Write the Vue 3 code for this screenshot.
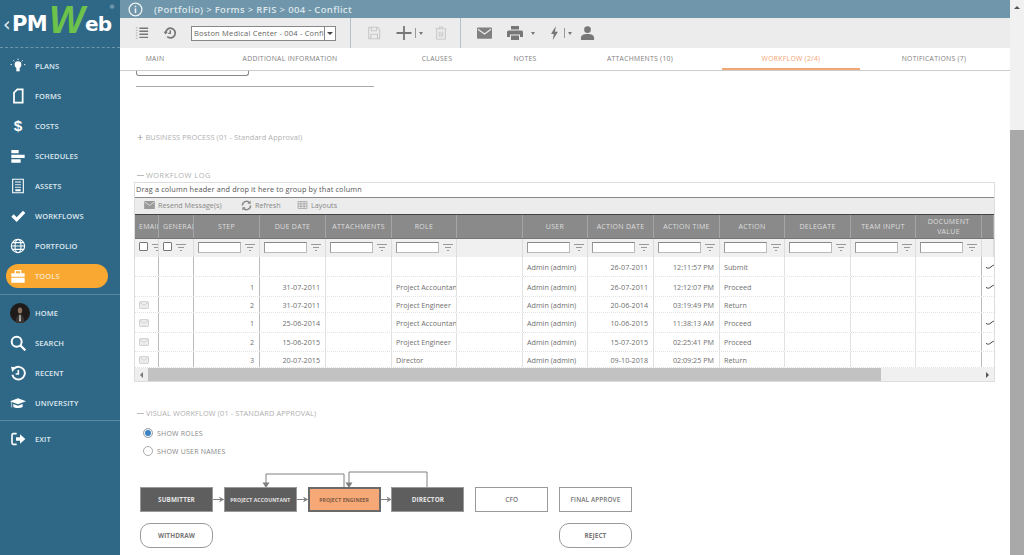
<template>
  <div class="page">
    <aside class="sidebar">
      <div class="logo">
        <span class="logo-back">‹</span><span class="logo-pm">PM</span><span class="logo-w">W</span><span class="logo-eb">eb</span><span class="logo-reg">®</span>
      </div>
      <nav class="nav">
        <div v-for="item in navTop" :key="item.label" class="nav-item" :class="{ active: item.active }">
          <svg class="nav-icon" viewBox="0 0 24 24" v-html="item.icon"></svg>
          <span>{{ item.label }}</span>
        </div>
      </nav>
      <nav class="nav nav-second">
        <div v-for="item in navBottom" :key="item.label" class="nav-item">
          <svg class="nav-icon" :class="{ large: item.avatar }" viewBox="0 0 24 24" v-html="item.icon"></svg>
          <span>{{ item.label }}</span>
        </div>
      </nav>
      <nav class="nav nav-second nav-exit">
        <div class="nav-item">
          <svg class="nav-icon" viewBox="0 0 24 24">
            <path d="M10 4H5a2 2 0 0 0-2 2v12a2 2 0 0 0 2 2h5" fill="none" stroke="#fff" stroke-width="2.4" />
            <path d="M9 9.5h6V5l8 7-8 7v-4.5H9z" fill="#fff" />
          </svg>
          <span>EXIT</span>
        </div>
      </nav>
    </aside>

    <div class="main">
      <header class="crumbs">
        <svg class="info" viewBox="0 0 16 16">
          <circle cx="8" cy="8" r="6.8" fill="none" stroke="#eef3f5" stroke-width="1.4" />
          <rect x="7.2" y="6.8" width="1.6" height="5" fill="#eef3f5" />
          <rect x="7.2" y="4" width="1.6" height="1.6" fill="#eef3f5" />
        </svg>
        <span>(Portfolio) &gt; Forms &gt; RFIS &gt; 004 - Conflict</span>
      </header>

      <div class="toolbar">
        <svg class="tool first" viewBox="0 0 16 16">
          <path d="M5 2.5h10M5 6h10M5 9.5h10M5 13h10" stroke="#777" stroke-width="1.6" />
          <path d="M1 2h2M1 5h2M1 8h2M1 11h2M1 14h2" stroke="#aaa" stroke-width="1" />
        </svg>
        <svg class="tool history" viewBox="0 0 16 16">
          <path d="M3 8a5.5 5.5 0 1 1 1.8 4.1" fill="none" stroke="#777" stroke-width="2" />
          <path d="M0.6 6.5h5L3 9.6z" fill="#777" />
          <path d="M8.3 4.8v3.6H6" fill="none" stroke="#777" stroke-width="1.6" />
        </svg>
        <div class="doc-select">
          <span>Boston Medical Center - 004 - Confl</span>
          <i class="doc-arrow"></i>
        </div>
        <div class="tool-sep sep-a"></div>
        <svg class="tool save" viewBox="0 0 16 16">
          <path d="M2 1.5h10l2.5 2.5v10.5H2z M5 1.5v4h6v-4 M4.5 14.5v-5h7.5v5" fill="none" stroke="#c6c6c6" stroke-width="1.2" />
        </svg>
        <svg class="tool plus" viewBox="0 0 16 16">
          <path d="M8 1v14M0.5 8h15" stroke="#777" stroke-width="1.8" />
        </svg>
        <div class="mini-sep"></div>
        <i class="caret"></i>
        <svg class="tool trash" viewBox="0 0 16 16">
          <path d="M3 4v11h10V4M1.5 3.2h13M6 3V1.2h4V3M6 6.5v6M8 6.5v6M10 6.5v6" fill="none" stroke="#c6c6c6" stroke-width="1.1" />
        </svg>
        <div class="tool-sep sep-b"></div>
        <svg class="tool mail" viewBox="0 0 16 12">
          <rect width="16" height="12" rx="1" fill="#808080" />
          <path d="M1 2l7 5 7-5" fill="none" stroke="#ececec" stroke-width="1.2" />
        </svg>
        <svg class="tool print" viewBox="0 0 16 14">
          <path d="M4 0h8v3.5H4zM1.5 4.5h13a1.5 1.5 0 0 1 1.5 1.5v5h-3V8.5H3V11H0V6a1.5 1.5 0 0 1 1.5-1.5zM4 9.5h8V14H4z" fill="#777" />
        </svg>
        <i class="caret print-caret"></i>
        <svg class="tool bolt" viewBox="0 0 10 16">
          <path d="M6.5 0L1 9h3.2L3 16l6-9.5H5.6z" fill="#777" />
        </svg>
        <div class="mini-sep bolt-sep"></div>
        <i class="caret"></i>
        <svg class="tool user" viewBox="0 0 16 16">
          <circle cx="8" cy="4.2" r="3.8" fill="#777" />
          <path d="M0.5 16v-2.5c0-2.6 2.6-4.3 7.5-4.3s7.5 1.7 7.5 4.3V16z" fill="#777" />
        </svg>
      </div>

      <div class="tabs">
        <div v-for="tab in tabs" :key="tab.label" class="tab" :class="{ current: tab.current }" :style="{ width: tab.width + 'px', paddingRight: (tab.pad || 0) + 'px' }">
          {{ tab.label }}
        </div>
      </div>

      <section class="content">
        <div class="stub-box"></div>
        <div class="stub-line"></div>

        <div class="section-title business"><span class="plus-mark">+</span> BUSINESS PROCESS (01 - Standard Approval)</div>
        <div class="section-title log-title"><span class="dash-mark"></span> WORKFLOW LOG</div>

        <div class="grid">
          <div class="group-panel">Drag a column header and drop it here to group by that column</div>
          <div class="grid-tools">
            <span class="grid-tool resend">
              <svg viewBox="0 0 12 9" class="g-ico"><rect width="12" height="9" fill="#9a9a9a" /><path d="M0.5 1l5.5 4 5.5-4" fill="none" stroke="#eee" stroke-width="0.9" /></svg>
              Resend Message(s)
            </span>
            <span class="grid-tool refresh">
              <svg viewBox="0 0 12 12" class="g-ico square"><path d="M1.5 6a4.5 4.5 0 0 1 8-2.8M10.5 6a4.5 4.5 0 0 1-8 2.8" fill="none" stroke="#888" stroke-width="1.6" /><path d="M10.5 0.5v3.5H7zM1.5 11.5V8H5z" fill="#888" /></svg>
              Refresh
            </span>
            <span class="grid-tool">
              <svg viewBox="0 0 12 10" class="g-ico"><path d="M.5.5h11v9H.5zM.5 3.5h11M.5 6.5h11M4 .5v9M8 .5v9" fill="none" stroke="#999" stroke-width="0.9" /></svg>
              Layouts
            </span>
          </div>

          <div class="row head">
            <div v-for="(col, i) in columns" :key="i" class="cell" :class="col.headClass">{{ col.title }}</div>
          </div>

          <div class="row filters">
            <div v-for="(col, i) in columns" :key="i" class="cell">
              <i v-if="col.filter === 'check'" class="check"></i>
              <i v-if="col.filter === 'input'" class="filter-input"></i>
              <svg v-if="col.filter" class="funnel" viewBox="0 0 10 7"><path d="M0 .5h10M2 3.5h6M4 6.5h2" stroke="#999" stroke-width="1" /></svg>
            </div>
          </div>

          <div v-for="(row, r) in rows" :key="r" class="row body" :style="{ height: row.h + 'px' }">
            <div class="cell"><svg v-if="row.mail" class="env" viewBox="0 0 12 9"><rect x=".5" y=".5" width="11" height="8" rx="1" fill="#eee" stroke="#c4c4c4" /><path d="M1 1.5l5 3.5 5-3.5" fill="none" stroke="#c4c4c4" stroke-width=".8" /></svg></div>
            <div class="cell"></div>
            <div class="cell right">{{ row.step }}</div>
            <div class="cell right">{{ row.due }}</div>
            <div class="cell"></div>
            <div class="cell">{{ row.role }}</div>
            <div class="cell"></div>
            <div class="cell">Admin (admin)</div>
            <div class="cell right">{{ row.date }}</div>
            <div class="cell right">{{ row.time }}</div>
            <div class="cell">{{ row.action }}</div>
            <div class="cell"></div>
            <div class="cell"></div>
            <div class="cell"></div>
            <div class="cell tail"><svg v-if="row.sign" class="squiggle" viewBox="0 0 10 5"><path d="M0 3.4c2 1.4 3.5 .8 5-.6s3-1.8 5-1.6" fill="none" stroke="#444" stroke-width="1" /></svg></div>
          </div>

          <div class="hscroll">
            <div class="hbtn"><i class="arrow-left"></i></div>
            <div class="hthumb"></div>
            <div class="hrest"><i class="arrow-right"></i></div>
          </div>
        </div>

        <div class="section-title visual-title"><span class="dash-mark"></span> VISUAL WORKFLOW (01 - STANDARD APPROVAL)</div>

        <div class="radio-row first-radio"><i class="radio on"></i> SHOW ROLES</div>
        <div class="radio-row"><i class="radio"></i> SHOW USER NAMES</div>

        <div class="flow">
          <svg class="flow-lines" viewBox="0 0 500 80" width="500" height="80">
            <g fill="none" stroke="#808080" stroke-width="1">
              <path d="M73 12.5h10.8M156.8 12.5h10.8M240.6 12.5h10.8" />
              <path d="M204 0v-13h-78v12" />
              <path d="M287 0v-15h-78v14" />
            </g>
            <g fill="#808080">
              <path d="M79 9.5l5 3-5 3 1.5-3zM163 9.5l5 3-5 3 1.5-3zM246.5 9.5l5 3-5 3 1.5-3z" />
              <path d="M122.5-4.500h7L126 1zM205.5-4.500h7L209 1z" />
            </g>
          </svg>
          <div v-for="box in boxes" :key="box.label" class="flow-box" :class="box.kind">{{ box.label }}</div>
          <div class="flow-box pill">WITHDRAW</div>
          <div class="flow-box pill reject">REJECT</div>
        </div>
      </section>
    </div>

    <div class="vscroll">
      <div class="vbtn"><i class="arrow-up"></i></div>
      <div class="vthumb"></div>
    </div>
  </div>
</template>

<script setup>
const white = 'fill="#fff"'

const navTop = [
  { label: 'PLANS', icon: `<circle cx="12" cy="10" r="5" ${white}/><rect x="9.500" y="15" width="5" height="5" ${white}/><path d="M12 1v2M3 10H1M23 10h-2M5 3.500l1.500 1.500M19 3.500L17.500 5" stroke="#fff" stroke-width="1.400"/>` },
  { label: 'FORMS', icon: `<path d="M11 2h8v20H6V7z" fill="none" stroke="#fff" stroke-width="2.600"/>` },
  { label: 'COSTS', icon: `<text x="12" y="20" text-anchor="middle" font-size="23" font-family="Liberation Sans, sans-serif" font-weight="700" fill="#fff">$</text>` },
  { label: 'SCHEDULES', icon: `<path d="M2 3h11v5H2zM2 10h20v5H2zM2 17h14v5H2z" ${white}/>` },
  { label: 'ASSETS', icon: `<path d="M4 2h16v20H4z" fill="none" stroke="#fff" stroke-width="1.600"/><path d="M8 5h2v2H8zM11 5h2v2h-2zM14 5h2v2h-2zM8 9h2v2H8zM11 9h2v2h-2zM14 9h2v2h-2zM8 13h2v2H8zM11 13h2v2h-2zM14 13h2v2h-2zM8 17h8v3H8z" ${white}/>` },
  { label: 'WORKFLOWS', icon: `<path d="M2 13l3.500-3.500L10 14 19.500 4 23 7.500 10 21z" ${white}/>` },
  { label: 'PORTFOLIO', icon: `<g fill="none" stroke="#fff" stroke-width="1.700"><circle cx="12" cy="12" r="10"/><ellipse cx="12" cy="12" rx="4.500" ry="10"/><path d="M2 12h20M3.500 7h17M3.500 17h17"/></g>` },
  { label: 'TOOLS', active: true, icon: `<path d="M2 8h20v5H2zM2 14.500h20V22H2z" ${white}/><path d="M8 8V4h8v4" fill="none" stroke="#fff" stroke-width="2"/>` }
]

const navBottom = [
  { label: 'HOME', avatar: true, icon: `<circle cx="12" cy="12" r="12" fill="#1f1b1a"/><path d="M7 24c0-7 1.500-10 5-10s5 3 5 10z" fill="#3a3532"/><ellipse cx="12" cy="9" rx="2.600" ry="3.600" fill="#8d7260"/><path d="M11.200 14h1.600l.4 8h-2.400z" fill="#bbb"/>` },
  { label: 'SEARCH', icon: `<circle cx="10" cy="10" r="7.500" fill="none" stroke="#fff" stroke-width="3"/><path d="M15.500 15.500L23 23" stroke="#fff" stroke-width="3.400"/>` },
  { label: 'RECENT', icon: `<path d="M6 5.500a9.500 9.500 0 1 1-2.500 9" fill="none" stroke="#fff" stroke-width="2.800"/><path d="M1.500 2.500l8 1-6 7z" ${white}/><path d="M12.500 7.500v6H8.500" fill="none" stroke="#fff" stroke-width="2.400"/>` },
  { label: 'UNIVERSITY', icon: `<path d="M0 9.500L12 5l12 4.500-12 4.500z" ${white}/><path d="M5 13.500v4.500c3 2 10 2 14 0v-4.500l-7 2.600z" ${white}/><path d="M2.500 10.500v8" stroke="#fff" stroke-width="1"/>` }
]

const tabs = [
  { label: 'MAIN', width: 70 },
  { label: 'ADDITIONAL INFORMATION', width: 200 },
  { label: 'CLAUSES', width: 94 },
  { label: 'NOTES', width: 82 },
  { label: 'ATTACHMENTS (10)', width: 156, pad: 8 },
  { label: 'WORKFLOW (2/4)', width: 138, current: true },
  { label: 'NOTIFICATIONS (7)', width: 150, pad: 2 }
]

const columns = [
  { title: 'EMAIL', filter: 'check', headClass: 'clip' },
  { title: 'GENERAL', filter: 'check', headClass: 'clip' },
  { title: 'STEP', filter: 'input' },
  { title: 'DUE DATE', filter: 'input' },
  { title: 'ATTACHMENTS', filter: 'input' },
  { title: 'ROLE', filter: 'input' },
  { title: '' },
  { title: 'USER', filter: 'input' },
  { title: 'ACTION DATE', filter: 'input' },
  { title: 'ACTION TIME', filter: 'input' },
  { title: 'ACTION', filter: 'input' },
  { title: 'DELEGATE', filter: 'input' },
  { title: 'TEAM INPUT', filter: 'input' },
  { title: 'DOCUMENT VALUE', filter: 'input', headClass: 'wrap' },
  { title: '' }
]

const rows = [
  { h: 20, step: '', due: '', role: '', date: '26-07-2011', time: '12:11:57 PM', action: 'Submit', sign: true },
  { h: 20, step: '1', due: '31-07-2011', role: 'Project Accountant', date: '26-07-2011', time: '12:12:07 PM', action: 'Proceed', sign: true },
  { h: 16, mail: true, step: '2', due: '31-07-2011', role: 'Project Engineer', date: '20-06-2014', time: '03:19:49 PM', action: 'Return' },
  { h: 20, mail: true, step: '1', due: '25-06-2014', role: 'Project Accountant', date: '10-06-2015', time: '11:38:13 AM', action: 'Proceed', sign: true },
  { h: 19, mail: true, step: '2', due: '15-06-2015', role: 'Project Engineer', date: '15-07-2015', time: '02:25:41 PM', action: 'Proceed', sign: true },
  { h: 16, mail: true, step: '3', due: '20-07-2015', role: 'Director', date: '09-10-2018', time: '02:09:25 PM', action: 'Return' }
]

const boxes = [
  { label: 'SUBMITTER', kind: 'done' },
  { label: 'PROJECT ACCOUNTANT', kind: 'done small' },
  { label: 'PROJECT ENGINEER', kind: 'now small' },
  { label: 'DIRECTOR', kind: 'done' },
  { label: 'CFO', kind: 'todo' },
  { label: 'FINAL APPROVE', kind: 'todo' }
]
</script>

<style>
html, body {
  margin: 0;
  background: #fff;
}
</style>

<style scoped>
.page {
  display: flex;
  width: 1024px;
  height: 555px;
  overflow: hidden;
  font-family: "Open Sans", "Liberation Sans", sans-serif;
  color: #666;
  background: #fff;
}

/* sidebar */
.sidebar {
  flex: 0 0 120px;
  background: #2f6887;
  color: #dfe9ee;
}

.logo {
  display: flex;
  align-items: baseline;
  height: 48px;
  box-sizing: border-box;
  padding: 8px 0 0 3px;
  border-bottom: 1px dashed #6d96ab;
  font-family: "DejaVu Sans", sans-serif;
  font-weight: 700;
  color: #fff;
  position: relative;
}

.logo-back {
  font-size: 19px;
  font-weight: 400;
  width: 9px;
  color: #dfe9ee;
}

.logo-pm {
  width: 37px;
  font-size: 21px;
  letter-spacing: -0.6px;
}

.logo-w {
  width: 36px;
  font-family: "Liberation Sans", sans-serif;
  font-size: 38px;
  font-style: italic;
  color: #6cc24a;
  line-height: 20px;
  transform: translateY(2px);
}

.logo-eb {
  font-size: 20px;
  letter-spacing: -0.8px;
}

.logo-reg {
  position: absolute;
  left: 109px;
  top: 3px;
  font-size: 6px;
  font-weight: 400;
  color: #b9cbd5;
}

.nav {
  padding-top: 3px;
}

.nav-second {
  margin-top: 6px;
  padding-top: 3px;
  border-top: 1px solid #5a88a0;
}

.nav-exit {
  margin-top: 2px;
}

.nav-item {
  display: flex;
  align-items: center;
  height: 30px;
  padding-left: 35px;
  position: relative;
  font-size: 7.5px;
  font-weight: 600;
  letter-spacing: 0.1px;
}

.nav-icon {
  position: absolute;
  left: 10px;
  top: 7px;
  width: 16px;
  height: 16px;
}

.nav-icon.large {
  width: 20px;
  height: 20px;
  top: 5px;
}

.nav-item.active {
  height: 24px;
  margin: 3px 12px 3px 6px;
  padding-left: 29px;
  border-radius: 12px;
  background: #f9a832;
  color: #fbe6c4;
}

.nav-item.active .nav-icon {
  left: 4px;
  top: 4px;
}

/* main column */
.main {
  flex: 1;
  min-width: 0;
  display: flex;
  flex-direction: column;
}

.crumbs {
  flex: 0 0 18px;
  display: flex;
  align-items: center;
  padding-left: 8px;
  background: #6f96aa;
  color: #dde6ea;
  font-size: 9.5px;
  font-weight: 600;
  letter-spacing: 0.32px;
}

.info {
  width: 15px;
  height: 15px;
  margin-right: 11px;
}

.toolbar {
  flex: 0 0 30px;
  display: flex;
  align-items: center;
  padding-left: 15px;
  background: #ececec;
}

.tool {
  display: block;
  flex: none;
  width: 14px;
  height: 14px;
}

.history {
  margin-left: 14px;
}

.doc-select {
  display: flex;
  align-items: center;
  justify-content: space-between;
  box-sizing: border-box;
  width: 145px;
  height: 15px;
  margin-left: 14px;
  padding-left: 2px;
  background: #fff;
  border: 1px solid #888;
  font-size: 7.5px;
  color: #666;
  letter-spacing: 0.2px;
  overflow: hidden;
  white-space: nowrap;
}

.doc-arrow {
  display: flex;
  align-items: center;
  justify-content: center;
  flex: 0 0 11px;
  height: 13px;
  border-left: 1px solid #888;
}

.doc-arrow::after {
  content: "";
  border: 3px solid transparent;
  border-top: 3px solid #444;
  border-bottom: 0;
}

.tool-sep {
  flex: none;
  width: 1px;
  height: 30px;
  background: #b3c2ca;
}

.sep-a {
  margin-left: 14px;
}

.save {
  margin-left: 16px;
}

.plus {
  margin-left: 15px;
  width: 16px;
  height: 16px;
}

.mini-sep {
  flex: none;
  width: 1px;
  height: 10px;
  margin-left: 3px;
  background: #999;
}

.caret {
  flex: none;
  margin-left: 3px;
  border: 2px solid transparent;
  border-top: 3px solid #777;
  border-bottom: 0;
}

.trash {
  margin-left: 11px;
}

.sep-b {
  margin-left: 12px;
}

.mail {
  margin-left: 16px;
  width: 15px;
  height: 12px;
}

.print {
  margin-left: 15px;
  width: 16px;
}

.print-caret {
  margin-left: 8px;
}

.bolt {
  margin-left: 15px;
  width: 9px;
}

.bolt-sep {
  margin-left: 5px;
}

.user {
  margin-left: 8px;
  width: 15px;
}

.tabs {
  flex: 0 0 22px;
  display: flex;
  box-sizing: border-box;
  border-bottom: 1px solid #ccc;
  background: #fff;
}

.tab {
  box-sizing: border-box;
  height: 22px;
  line-height: 21px;
  text-align: center;
  font-size: 6.8px;
  color: #808080;
  letter-spacing: 0.3px;
}

.tab.current {
  color: #f4a46f;
  border-bottom: 2px solid #f4a574;
}

/* content */
.content {
  flex: 1;
  min-height: 0;
  overflow: hidden;
  padding-left: 15px;
}

.stub-box {
  width: 113px;
  height: 5px;
  margin-left: 1px;
  box-sizing: border-box;
  border: 1px solid #888;
  border-top: 0;
  border-radius: 0 0 3px 3px;
}

.stub-line {
  width: 238px;
  height: 1px;
  margin: 10px 0 0 1px;
  background: #aaa;
}

.section-title {
  display: flex;
  align-items: center;
  gap: 2px;
  height: 10px;
  font-size: 7.4px;
  color: #b0b0b0;
  letter-spacing: 0.1px;
}

.business {
  margin-top: 45px;
  margin-left: 2px;
}

.plus-mark {
  font-size: 11px;
  line-height: 10px;
  color: #999;
}

.log-title {
  margin-top: 28px;
  margin-left: 2px;
  letter-spacing: 0.5px;
}

.dash-mark {
  width: 7px;
  height: 1px;
  background: #bbb;
}

/* grid */
.grid {
  width: 861px;
  margin: 2px 0 0 -1px;
  box-sizing: border-box;
  border: 1px solid #ddd;
  font-size: 7.2px;
  color: #707070;
  overflow: hidden;
}

.group-panel {
  height: 14px;
  line-height: 13px;
  padding-left: 1px;
  font-size: 7.3px;
  color: #555;
  letter-spacing: 0.15px;
}

.grid-tools {
  display: flex;
  align-items: center;
  height: 17px;
  box-sizing: border-box;
  border-top: 1px solid #888;
  padding: 0 0 2px 9px;
  background: #ececec;
  color: #888;
  font-size: 7.2px;
}

.grid-tool {
  display: flex;
  align-items: center;
  gap: 3px;
}

.resend {
  width: 97px;
}

.refresh {
  width: 56px;
}

.g-ico {
  width: 11px;
  height: 8px;
}

.g-ico.square {
  width: 11px;
  height: 11px;
}

.row {
  display: grid;
  grid-template-columns: 24px 35px 66px 66px 66px 65px 66px 65px 66px 66px 65px 66px 65px 66px 12px;
}

.cell {
  box-sizing: border-box;
  display: flex;
  align-items: center;
  min-width: 0;
  overflow: hidden;
  white-space: nowrap;
  padding: 0 1px 0 4px;
  border-right: 1px solid #e2e2e2;
}

.head {
  height: 25px;
  box-sizing: border-box;
  border-top: 1px solid #444;
  border-bottom: 1px solid #777;
  background: #8a8a8a;
  color: #dedede;
  font-size: 7px;
  letter-spacing: 0.3px;
}

.head .cell {
  justify-content: center;
  text-align: center;
  line-height: 10px;
  padding: 0;
  border-right: 1px solid #a5a5a5;
}

.head .cell.wrap {
  white-space: normal;
  padding: 0 10px;
}

.head .cell.clip {
  justify-content: flex-start;
  padding: 0 0 0 4px;
}

.filters {
  height: 18px;
  background: #f0f0f0;
}

.filters .cell {
  align-items: flex-start;
  border-right-color: #ddd;
  padding: 3px 0 0 4px;
  gap: 3px;
}

.check {
  flex: none;
  width: 7px;
  height: 7px;
  border: 1px solid #777;
  background: #fff;
  border-radius: 1px;
}

.filter-input {
  flex: none;
  width: 41px;
  height: 9px;
  background: #fff;
  border: 1px solid #bbb;
  border-top-color: #888;
  border-left-color: #999;
}

.funnel {
  flex: none;
  width: 10px;
  height: 7px;
  margin: 2px 0 0 1px;
}

.body {
  border-bottom: 1px dotted #e2e2e2;
  box-sizing: border-box;
}

.body .cell:nth-child(1),
.body .cell:nth-child(2),
.body .cell:nth-child(3),
.body .cell:nth-child(14) {
  border-right-color: #bbb;
}

.cell.right {
  justify-content: flex-end;
  padding-right: 5px;
}

.env {
  width: 10px;
  height: 8px;
}

.tail {
  padding: 0 0 0 4px;
  border-right: 0;
}

.squiggle {
  flex: none;
  width: 10px;
  height: 5px;
}

.hscroll {
  display: flex;
  align-items: stretch;
  height: 13px;
  background: #eee;
}

.hbtn {
  flex: 0 0 13px;
  display: flex;
  align-items: center;
  justify-content: center;
}

.hthumb {
  flex: 0 0 733px;
  background: #c2c2c2;
}

.hrest {
  flex: 1;
  display: flex;
  align-items: center;
  justify-content: flex-end;
  padding-right: 5px;
  background: #f0f0f0;
}

.arrow-left {
  border: 3px solid transparent;
  border-right: 3px solid #777;
  border-left: 0;
}

.arrow-right {
  border: 3px solid transparent;
  border-left: 3px solid #555;
  border-right: 0;
}

/* visual workflow */
.visual-title {
  margin-top: 26px;
  margin-left: 2px;
}

.radio-row {
  display: flex;
  align-items: center;
  gap: 4px;
  height: 18px;
  margin-left: 8px;
  font-size: 7px;
  color: #888;
  letter-spacing: 0.2px;
}

.first-radio {
  margin-top: 6px;
}

.radio {
  flex: none;
  display: block;
  width: 8px;
  height: 8px;
  border: 1px solid #aaa;
  border-radius: 50%;
  background: #fff;
}

.radio.on {
  background: #3b82c4;
  box-shadow: inset 0 0 0 1px #fff;
}

.flow {
  display: grid;
  grid-template-columns: repeat(6, 73px);
  grid-auto-rows: 25px;
  column-gap: 10.8px;
  row-gap: 11px;
  position: relative;
  width: 500px;
  margin: 27px 0 0 5px;
}

.flow-lines {
  position: absolute;
  left: 0;
  top: 0;
  overflow: visible;
}

.flow-box {
  display: flex;
  align-items: center;
  justify-content: center;
  box-sizing: border-box;
  border: 1px solid #999;
  font-size: 6.4px;
  font-weight: 700;
  letter-spacing: 0.1px;
  white-space: nowrap;
  position: relative;
}

.flow-box.done {
  background: #5e5e5e;
  color: #e4e4e4;
}

.flow-box.small {
  font-size: 5.1px;
}

.flow-box.now {
  background: #f7a877;
  border: 2px solid #6a6a6a;
  color: #7d5a44;
}

.flow-box.todo {
  background: #fff;
  color: #777;
  font-weight: 600;
}

.flow-box.pill {
  grid-column: 1;
  grid-row: 2;
  border-radius: 10px;
  background: #fff;
  color: #777;
}

.flow-box.pill.reject {
  grid-column: 6;
}

/* page scrollbar */
.vscroll {
  flex: 0 0 14px;
  display: flex;
  flex-direction: column;
  background: #f1f1f1;
}

.vbtn {
  flex: 0 0 130px;
  display: flex;
  justify-content: center;
  padding-top: 6px;
  box-sizing: border-box;
}

.arrow-up {
  height: 0;
  border: 3px solid transparent;
  border-bottom: 3px solid #555;
  border-top: 0;
}

.vthumb {
  flex: 1;
  background: #a9a9a9;
}
</style>
